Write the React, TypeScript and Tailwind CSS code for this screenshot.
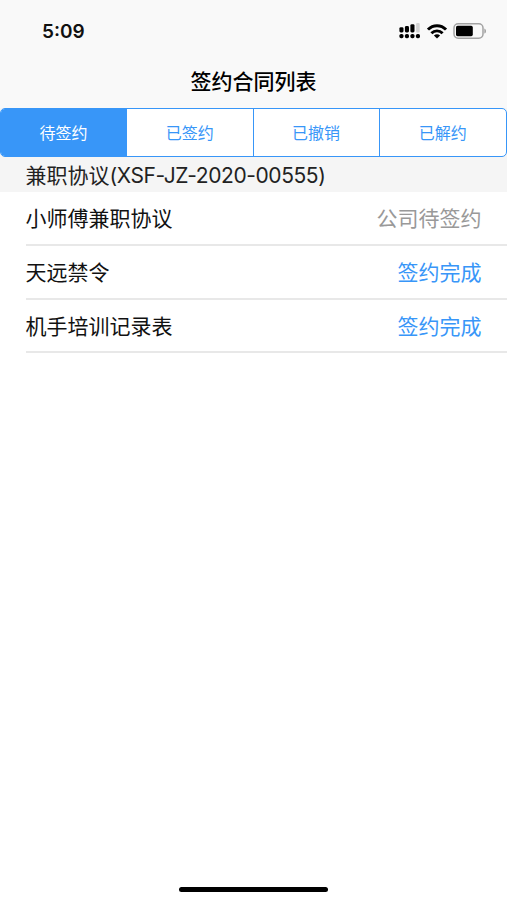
import { useState } from 'react';

const tabs = ['待签约', '已签约', '已撤销', '已解约'];

const contracts = [
  { name: '小师傅兼职协议', status: '公司待签约', done: false },
  { name: '天远禁令', status: '签约完成', done: true },
  { name: '机手培训记录表', status: '签约完成', done: true },
];

const SignalIcon = () => (
  <svg width="22" height="16" viewBox="0 0 22 16">
    <rect x="0.4" y="4.2" width="4.1" height="5.2" rx="1.4" />
    <rect x="5.9" y="3" width="4.1" height="6.4" rx="1.4" />
    <rect x="11.4" y="1.2" width="4.1" height="8.2" rx="1.4" />
    <rect x="17.1" y="0" width="3.6" height="9.4" rx="1" fill="#d3d3d3" />
    <rect x="0.4" y="10.9" width="4.1" height="4.4" rx="1.7" />
    <rect x="5.9" y="10.9" width="4.1" height="4.4" rx="1.7" />
    <rect x="11.4" y="10.9" width="4.1" height="4.4" rx="1.7" />
    <rect x="16.9" y="10.9" width="4.1" height="4.4" rx="1.7" />
  </svg>
);

const WifiIcon = () => (
  <svg width="20" height="15" viewBox="0 0 20 15" fill="none" stroke="#000" strokeWidth="2.9">
    <path d="M1 5.6C6 0.4 14 0.4 19 5.6" />
    <path d="M4.4 9.3C7.6 6.1 12.4 6.1 15.6 9.3" />
    <path d="M10 14.4L6.9 11.4C8.7 9.8 11.3 9.8 13.1 11.4Z" fill="#000" stroke="none" />
  </svg>
);

const BatteryIcon = () => (
  <svg width="34" height="16" viewBox="0 0 34 16">
    <rect x="1" y="0.8" width="29" height="14.4" rx="4.2" fill="none" stroke="#a3a3a3" strokeWidth="1.5" />
    <rect x="3" y="2.8" width="16.8" height="10.4" rx="1.6" />
    <path d="M31.3 5.4C33.6 6.2 33.6 9.8 31.3 10.6Z" fill="#a3a3a3" />
  </svg>
);

const StatusBar = () => (
  <div className="h-[62px] flex items-center justify-between pl-[42px] pr-5">
    <span className="pt-[3px] font-['Inter'] text-[19px] font-semibold text-[#111]">5:09</span>
    <div className="flex items-center">
      <SignalIcon />
      <div className="ml-1.5">
        <WifiIcon />
      </div>
      <div className="ml-1.5">
        <BatteryIcon />
      </div>
    </div>
  </div>
);

const App = () => {
  const [active, setActive] = useState(0);

  return (
    <div className="h-[900px] flex flex-col bg-white font-['Inter','Noto_Sans_CJK_SC',sans-serif]">
      <header className="h-[108px] bg-[#f9f9f9]">
        <StatusBar />
        <h1 className="text-center text-[21px] leading-[40px] font-medium text-black">签约合同列表</h1>
      </header>

      <div className="bg-[#f5f5f5]">
        <div className="h-[49px] grid grid-cols-4 border border-[#3896f8] rounded-[5px] overflow-hidden bg-white">
          {tabs.map((tab, i) => (
            <button
              key={tab}
              onClick={() => setActive(i)}
              className={`border-[#3896f8] text-base ${i < tabs.length - 1 ? 'border-r' : ''} ${active === i ? 'bg-[#3896f8] text-white' : 'text-[#3896f8]'}`}
            >
              {tab}
            </button>
          ))}
        </div>
        <h2 className="h-[35px] pl-[25.5px] text-[21px] leading-[37px] text-[#222]">
          兼职协议<span className="tracking-[-0.42px]">(XSF-JZ-2020-00555)</span>
        </h2>
      </div>

      <ul className="flex-1 pl-[25.5px] text-[21px]">
        {contracts.map((item) => (
          <li key={item.name} className="h-[53.8px] flex items-center justify-between pt-0.5 pr-[25.5px] border-b-2 border-[#e8e8e8]">
            <span className="text-[#111]">{item.name}</span>
            <span className={item.done ? 'text-[#3896f8]' : 'text-[#999]'}>{item.status}</span>
          </li>
        ))}
      </ul>

      <div className="h-[14px] flex justify-center">
        <div className="w-[149px] h-[5px] mt-[1px] rounded-full bg-black" />
      </div>
    </div>
  );
};

export default App;
